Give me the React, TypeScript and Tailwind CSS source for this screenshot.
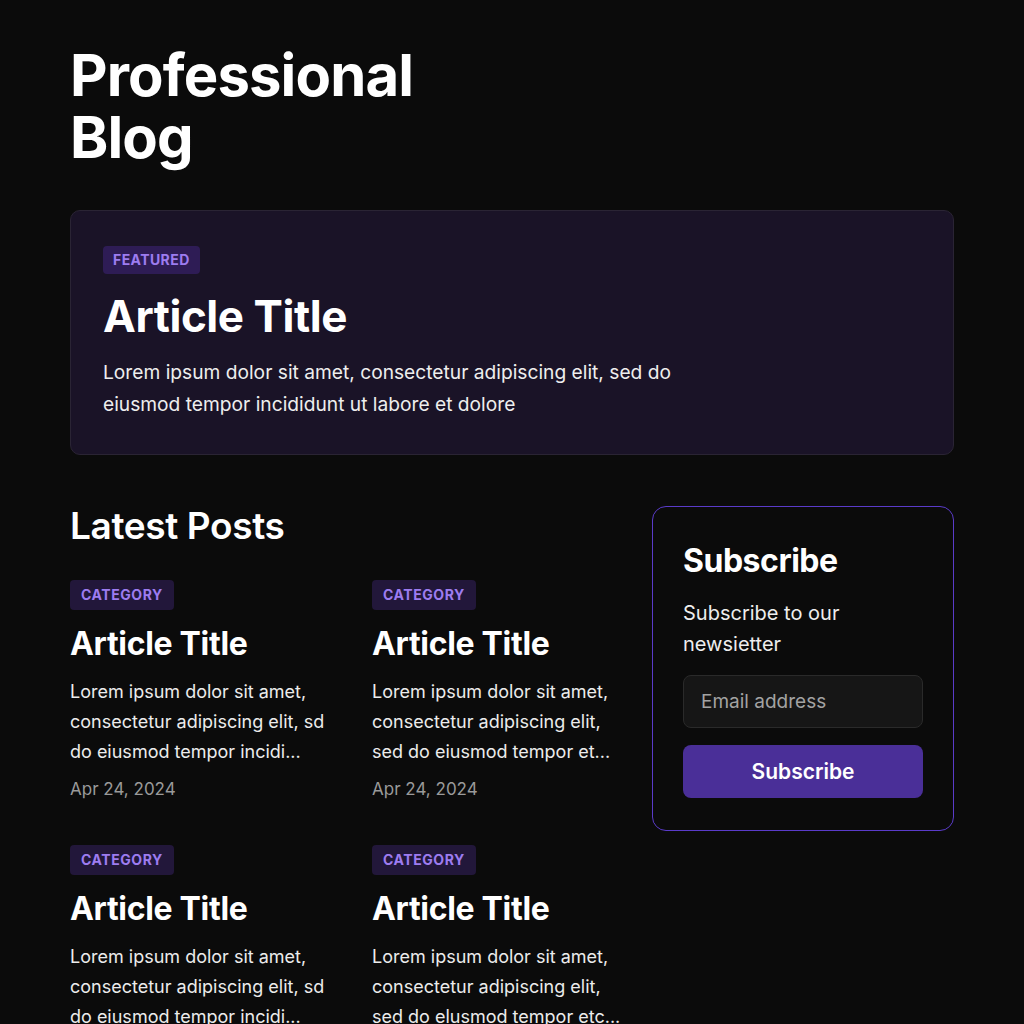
import React from "react";

const posts = [
  { lines: ["Lorem ipsum dolor sit amet,", "consectetur adipiscing elit, sd", "do eiusmod tempor incidi..."], date: "Apr 24, 2024" },
  { lines: ["Lorem ipsum dolor sit amet,", "consectetur adipiscing elit,", "sed do eiusmod tempor et..."], date: "Apr 24, 2024" },
  { lines: ["Lorem ipsum dolor sit amet,", "consectetur adipiscing elit, sd", "do eiusmod tempor incidi..."], date: "Apr 24, 2024" },
  { lines: ["Lorem ipsum dolor sit amet,", "consectetur adipiscing elit,", "sed do elusmod tempor etc..."], date: "Apr 24, 2024" },
];

function Post({ lines, date }: { lines: string[]; date: string }) {
  return (
    <div className="flex flex-col items-start">
      <span className="rounded-[4px] bg-[#22173a] px-[11px] py-[5px] text-[14px] font-bold leading-[20px] tracking-[0.04em] text-[#9d7cf0]">
        CATEGORY
      </span>
      <h3 className="mt-[13px] text-[32px] font-bold leading-[42px] tracking-[-0.01em] text-white">Article Title</h3>
      <p className="mt-[12px] whitespace-nowrap text-[18px] leading-[30px] text-[#ececec]">
        {lines.map((l, i) => (
          <span key={i} className="block">
            {l}
          </span>
        ))}
      </p>
      <p className="mt-[9px] text-[17px] leading-[26px] text-[#9a9a9a]">{date}</p>
    </div>
  );
}

export default function App() {
  return (
    <div className="min-h-screen bg-[#0b0b0b] font-['Inter',sans-serif] text-white">
      <div className="px-[70px] pt-[44px]">
        <h1 className="text-[58px] font-bold leading-[62px] tracking-[-0.015em]">
          Professional
          <br />
          Blog
        </h1>

        <div className="mt-[42px] w-[884px] rounded-[10px] border border-[#2a2434] bg-[#1a1327] px-[32px] pb-[34px] pt-[35px]">
          <span className="inline-block rounded-[4px] bg-[#2e1c55] px-[10px] py-[4px] text-[14px] font-bold leading-[20px] tracking-[0.03em] text-[#9d7cf0]">
            FEATURED
          </span>
          <h2 className="mt-[14px] text-[44px] font-bold leading-[56px] tracking-[-0.01em]">Article Title</h2>
          <p className="mt-[12px] max-w-[610px] text-[19.2px] leading-[32px] text-[#eeeeee]">
            Lorem ipsum dolor sit amet, consectetur adipiscing elit, sed do eiusmod tempor incididunt ut labore et dolore
          </p>
        </div>

        <div className="mt-[51px] flex gap-[32px]">
          <div className="w-[550px]">
            <h2 className="text-[37px] font-semibold leading-[40px] tracking-[-0.01em]">Latest Posts</h2>
            <div className="mt-[34px] grid grid-cols-[270px_258px] gap-x-[32px] gap-y-[43px]">
              {posts.map((p, i) => (
                <Post key={i} lines={p.lines} date={p.date} />
              ))}
            </div>
          </div>

          <div className="h-[325px] w-[302px] rounded-[14px] border border-[#5a3bc9] px-[30px] pt-[34px]">
            <h3 className="text-[32px] font-bold leading-[40px] tracking-[-0.015em]">Subscribe</h3>
            <p className="mt-[17px] text-[20px] leading-[31px] text-[#eeeeee]">
              Subscribe to our
              <br />
              newsietter
            </p>
            <input
              placeholder="Email address"
              className="mt-[15px] h-[53px] w-full rounded-[8px] border border-[#2a2a2a] bg-[#161616] px-[17px] text-[19px] text-white outline-none placeholder:text-[#a3a3a3]"
            />
            <button className="mt-[17px] h-[53px] w-full rounded-[8px] bg-[#4a2f98] text-[21px] font-semibold text-white">
              Subscribe
            </button>
          </div>
        </div>
      </div>
    </div>
  );
}
